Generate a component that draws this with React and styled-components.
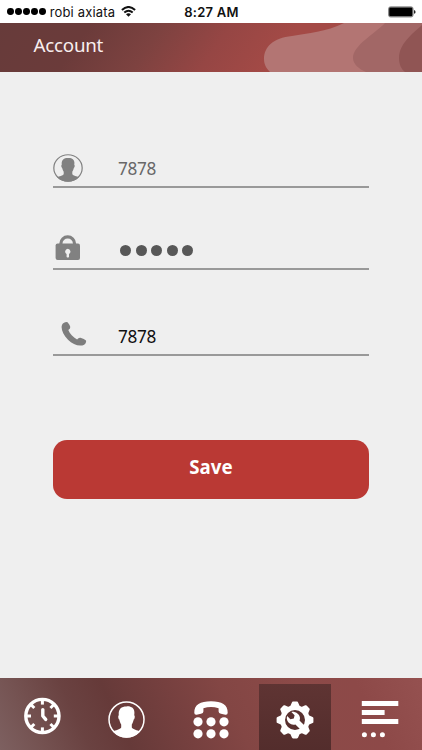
import React from 'react';
import styled, { createGlobalStyle } from 'styled-components';

const GlobalStyle = createGlobalStyle`
  * {
    box-sizing: border-box;
  }
  body {
    margin: 0;
    background: #efefef;
  }
`

const GEAR_ANGLES = [0, 45, 90, 135, 180, 225, 270, 315];

function WifiIcon() {
  return (
    <WifiSvg width="15" height="11" viewBox="0 0 15 11" fill="none" stroke="#111" strokeWidth="2">
      <path d="M0.9 3.9 Q7.5 -1.9 14.1 3.9" />
      <path d="M3.3 6.6 Q7.5 2.9 11.7 6.6" />
      <path d="M7.5 10.8 L5 8.2 Q7.5 6.4 10 8.2 Z" fill="#111" stroke="none" />
    </WifiSvg>
  )
}

function BatteryIcon() {
  return (
    <svg width="28" height="12" viewBox="0 0 28 12">
      <rect x="0.5" y="0.8" width="24.6" height="10.2" rx="2" fill="#bbb" stroke="#777" strokeWidth="0.8" />
      <rect x="1.2" y="1.5" width="23.2" height="8.8" rx="1.2" fill="#000" />
      <path d="M26 4 Q27.6 4.4 27.6 5.9 Q27.6 7.4 26 7.8 Z" fill="#222" />
    </svg>
  )
}

function PersonIcon({ color, width, height }) {
  return (
    <svg width={width} height={height} viewBox="0 0 37 37" preserveAspectRatio="none">
      <circle cx="18.5" cy="18.5" r="17.5" fill="none" stroke={color} strokeWidth="1.5" />
      <path
        d="M18.5 5.4 C23.4 5 26.6 7.4 26.4 12 C26.4 13 26.3 13.6 26.2 14.2 C27.2 14.5 26.8 17.9 25.7 18.6 C25.3 20.7 24.6 22.3 23.8 23.4 L23.8 26.6 C25 28.7 29.4 29.2 32 30.6 A18 18 0 0 1 5 30.6 C7.6 29.2 12 28.7 13.2 26.6 L13.2 23.4 C12.4 22.3 11.7 20.7 11.3 18.6 C10.2 17.9 9.8 14.5 10.8 14.2 C10.2 8.6 12.6 5.4 18.5 5.4 Z"
        fill={color}
      />
    </svg>
  )
}

function LockIcon() {
  return (
    <svg width="26" height="26" viewBox="0 0 26 26">
      <path d="M5.9 11 V8.5 A6.8 6.6 0 0 1 19.5 8.5 V11" fill="none" stroke="#818181" strokeWidth="3.2" />
      <rect x="0.6" y="8.4" width="24.4" height="16.6" rx="2" fill="#818181" />
      <path d="M12.8 13.7 A2.9 2.9 0 0 1 14 19.1 V22.1 Q12.8 23.1 11.6 22.1 V19.1 A2.9 2.9 0 0 1 12.8 13.7 Z" fill="#efefef" />
    </svg>
  )
}

function PhoneIcon() {
  return (
    <svg width="26" height="26" viewBox="0 0 26 26">
      <path
        d="M1.9 2.5 Q4.2 0.2 6.6 1.2 Q8.5 3.4 9.3 6 Q9.3 7.8 7.3 9.1 C8.8 12.8 12 16.4 16.1 18.4 Q17.6 16.3 19.5 16.7 Q23.3 17.6 25 19.6 Q25.6 22.2 23.2 23.7 C19.2 25.8 12.1 24.2 7 18.8 C1.1 12.7 -1 5.8 1.9 2.5 Z"
        fill="#7d7d7d"
      />
    </svg>
  )
}

function ClockIcon() {
  return (
    <svg width="38" height="38" viewBox="-19.4 -19 38 38">
      <circle r="16.6" fill="none" stroke="#fff" strokeWidth="3.4" />
      {GEAR_ANGLES.map(angle => (
        <line key={angle} y1="-16" y2="-11.4" stroke="#fff" strokeWidth="3" transform={`rotate(${angle})`} />
      ))}
      <path d="M0.4 -6.4 V0 L3.3 3.4" fill="none" stroke="#fff" strokeWidth="3.4" strokeLinecap="round" strokeLinejoin="round" />
    </svg>
  )
}

function DialpadIcon() {
  return (
    <svg width="36" height="38" viewBox="0 0 36 38">
      <path
        d="M1.3 11.7 C1.1 3.8 7.2 0.3 18 0.3 C28.8 0.3 34.9 3.8 34.7 11.7 Q34.7 14 32.4 13.7 L28 12.7 Q25.6 12.1 25.6 10.4 V7.2 Q18 5 10.4 7.2 V10.4 Q10.4 12.1 8 12.7 L3.6 13.7 Q1.3 14 1.3 11.7 Z"
        fill="#fff"
      />
      {[20.8, 32.8].map(y => [5, 18, 31].map(x => (
        <circle key={`${x}-${y}`} cx={x} cy={y} r="4.6" fill="#fff" />
      )))}
    </svg>
  )
}

function SettingsIcon() {
  return (
    <svg width="38" height="38" viewBox="-19 -19 38 38">
      <circle r="12.4" fill="none" stroke="#fff" strokeWidth="4.8" />
      {GEAR_ANGLES.map(angle => (
        <path key={angle} d="M-5 -13.2 L-3.1 -17.6 Q-2.8 -18.4 -2 -18.4 H2 Q2.8 -18.4 3.1 -17.6 L5 -13.2 Z" fill="#fff" transform={`rotate(${angle})`} />
      ))}
      <path
        d="M-3.6 -8 C-0.2 -8.7 3.9 -6.4 4.8 -3 C5.2 -1.6 4.9 -0.6 4.5 0.6 L12 8 L8 12 L0.4 4.4 C-3.5 5.6 -7.8 2.9 -8.2 -1.4 Q-8.3 -2.7 -7.8 -4 L-4.6 -0.8 L-1.2 -1.5 L-0.4 -4.7 Z"
        fill="#fff"
      />
    </svg>
  )
}

function MoreIcon() {
  return (
    <svg width="38" height="38" viewBox="0 0 38 38" fill="#fff">
      <rect x="0.8" y="1" width="36.5" height="5" />
      <rect x="0.8" y="10" width="22.8" height="5" />
      <rect x="0.8" y="19" width="36.5" height="5" />
      {[3.4, 12.4, 21.4].map(x => <circle key={x} cx={x} cy="34.8" r="2.5" />)}
    </svg>
  )
}

const tabs = [
  { name: 'history', icon: <ClockIcon />, top: 13 },
  { name: 'contacts', icon: <PersonIcon color="#fff" width={37} height={37} />, top: 17 },
  { name: 'dialpad', icon: <DialpadIcon />, top: 17 },
  { name: 'settings', icon: <SettingsIcon />, top: 17, active: true },
  { name: 'more', icon: <MoreIcon />, top: 16 },
];

export default function App() {
  return (
    <Screen>
      <GlobalStyle />
      <StatusBar>
        <Carrier>
          <SignalDots>
            {[1, 2, 3, 4, 5].map(n => <SignalDot key={n} />)}
          </SignalDots>
          robi axiata
          <WifiIcon />
        </Carrier>
        <Clock>8:27 AM</Clock>
        <Battery><BatteryIcon /></Battery>
      </StatusBar>

      <Header>
        <HeaderWaves width="160" height="49" viewBox="262 23 160 49">
          <path d="M422 23 H344 C326 32 308 33 292 36 C273 38 264 47 264 59 C264 65 267 69 270 72 H422 Z" fill="#b37573" />
          <path d="M385 23 C376 33 353 45 353 58 C353 64 359 69 366 72 H422 V23 Z" fill="#a26766" />
          <path d="M422 25 C412 34 399 44 399 58 C399 64 401 69 405 72 H422 Z" fill="#905554" />
        </HeaderWaves>
        <Title>Account</Title>
      </Header>

      <Form>
        <Field $height={38}>
          <FieldIcon $left={0} $top={4}><PersonIcon color="#818181" width={30} height={28} /></FieldIcon>
          <Value $color="#686868" $bottom={3.4}>7878</Value>
        </Field>
        <Field $height={82}>
          <FieldIcon $left={2} $top={47}><LockIcon /></FieldIcon>
          <Password>
            {[1, 2, 3, 4, 5].map(n => <PasswordDot key={n} />)}
          </Password>
        </Field>
        <Field $height={86}>
          <FieldIcon $left={7.5} $top={51}><PhoneIcon /></FieldIcon>
          <Value $color="#111" $bottom={4}>7878</Value>
        </Field>
        <SaveButton>Save</SaveButton>
      </Form>

      <TabBar>
        {tabs.map(tab => (
          <Tab key={tab.name} $top={tab.top} $active={tab.active} aria-label={tab.name}>
            {tab.icon}
          </Tab>
        ))}
      </TabBar>
    </Screen>
  );
}

const Screen = styled.div`
  display: flex;
  flex-direction: column;
  width: 422px;
  height: 750px;
  overflow: hidden;
  background: #efefef;
  font-family: "Noto Sans", "Open Sans", sans-serif;
`

const StatusBar = styled.div`
  display: grid;
  grid-template-columns: 1fr auto 1fr;
  align-items: center;
  height: 23px;
  padding: 0 6px 0 7px;
  background: #fff;
  color: #111;
  font-family: Inter, "Liberation Sans", sans-serif;
  font-size: 13px;
`

const Carrier = styled.div`
  display: flex;
  align-items: center;
  white-space: nowrap;
  letter-spacing: 0.15px;
`

const SignalDots = styled.div`
  display: flex;
  gap: 1.2px;
  margin-right: 4px;
`

const SignalDot = styled.span`
  width: 6.8px;
  height: 6.8px;
  border-radius: 50%;
  background: #000;
`

const WifiSvg = styled.svg`
  margin-left: 6px;
`

const Clock = styled.div`
  font-weight: 600;
  letter-spacing: 0.25px;
`

const Battery = styled.div`
  display: flex;
  justify-content: flex-end;
`

const Header = styled.div`
  position: relative;
  height: 49px;
  background: linear-gradient(125deg, #673b3a 0%, #6b3b3a 20%, #7d4240 36%, #964644 51%, #a44a46 66%);
`

const HeaderWaves = styled.svg`
  position: absolute;
  right: 0;
  top: 0;
`

const Title = styled.div`
  padding: 9px 0 0 33.5px;
  line-height: 26px;
  font-size: 18.8px;
  letter-spacing: -0.25px;
  color: #f8efef;
`

const Form = styled.div`
  flex: 1;
  padding: 77.5px 53px 0;
`

const Field = styled.div`
  display: flex;
  height: ${props => props.$height}px;
  border-bottom: 2px solid #999;
`

const FieldIcon = styled.div`
  width: 65px;
  padding: ${props => props.$top}px 0 0 ${props => props.$left}px;
`

const Value = styled.div`
  align-self: flex-end;
  padding-bottom: ${props => props.$bottom}px;
  line-height: 26px;
  font-size: 17.2px;
  letter-spacing: -0.3px;
  color: ${props => props.$color};
`

const Password = styled.div`
  display: flex;
  align-self: flex-end;
  gap: 4.5px;
  padding: 0 0 12px 2px;
`

const PasswordDot = styled.span`
  width: 11px;
  height: 11px;
  border-radius: 50%;
  background: #575757;
`

const SaveButton = styled.button`
  display: block;
  width: 100%;
  height: 59px;
  margin-top: 84px;
  padding: 0 0 6px;
  border: none;
  border-radius: 14px;
  background: #ba3934;
  color: #fff;
  font-family: inherit;
  font-size: 18.7px;
  font-weight: 700;
`

const TabBar = styled.div`
  display: flex;
  height: 72.5px;
  padding-top: 6px;
  background: linear-gradient(65deg, #7d6060 0%, #755352 9%, #6a4241 20%, #663a39 29%, #76403f 43%, #834644 55%, #8c4a48 72%, #8d4948 85%, #955150 100%);
`

const Tab = styled.div`
  flex: 0 0 72px;
  display: flex;
  justify-content: center;
  align-items: flex-start;
  margin: 0 6.2px;
  padding-top: ${props => props.$top}px;
  background: ${props => props.$active ? 'linear-gradient(#5f3433, #532d2c)' : 'none'};
`
